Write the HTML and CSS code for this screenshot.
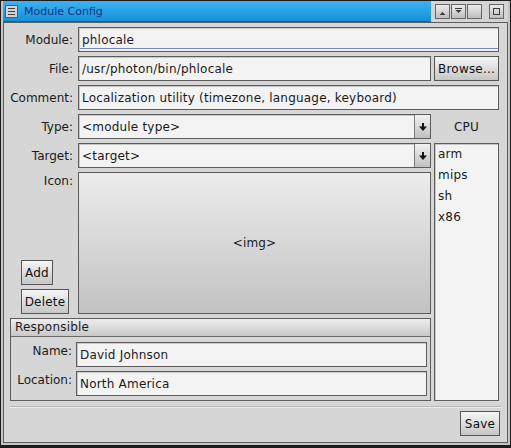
FILE: index.html
```html
<!DOCTYPE html>
<html lang="en">
<head>
    <meta charset="UTF-8">
    <title>Module Config</title>
    <link rel="stylesheet" href="styles.css">
</head>
<body>
    <div class="window">
        <div class="titlebar">
            <div class="caption">
                <span class="menu-btn"><i></i><i></i><i></i></span>
                <span class="title">Module Config</span>
            </div>
            <div class="frame-btns">
                <span class="fbtn">
                    <svg width="13" height="13" viewBox="0 0 13 13"><polygon points="3.5,10 6.5,7 9.5,10" fill="#3a3a3a"/></svg>
                </span>
                <span class="fbtn">
                    <svg width="13" height="13" viewBox="0 0 13 13"><rect x="3" y="3" width="7" height="1" fill="#3a3a3a"/><polygon points="3.5,5 9.5,5 6.5,8" fill="#3a3a3a"/></svg>
                </span>
                <span class="fbtn"></span>
                <span class="fbtn last">
                    <svg width="13" height="13" viewBox="0 0 13 13"><rect x="3.5" y="3.5" width="6" height="6" fill="none" stroke="#3a3a3a"/></svg>
                </span>
            </div>
        </div>

        <div class="body">
            <div class="form">
                <label class="lbl">Module:</label>
                <div class="field wide focused">phlocale</div>

                <label class="lbl">File:</label>
                <div class="field">/usr/photon/bin/phlocale</div>
                <button class="btn browse">Browse...</button>

                <label class="lbl">Comment:</label>
                <div class="field wide">Localization utility (timezone, language, keyboard)</div>

                <label class="lbl">Type:</label>
                <div class="combo">
                    <span class="combo-text">&lt;module type&gt;</span>
                    <span class="combo-arrow"><svg width="8" height="8" viewBox="0 0 8 8"><path d="M3 0h2v3.5h3L4 8 0 3.5h3z" fill="#111"/></svg></span>
                </div>
                <div class="cpu-label">CPU</div>

                <label class="lbl">Target:</label>
                <div class="combo">
                    <span class="combo-text">&lt;target&gt;</span>
                    <span class="combo-arrow"><svg width="8" height="8" viewBox="0 0 8 8"><path d="M3 0h2v3.5h3L4 8 0 3.5h3z" fill="#111"/></svg></span>
                </div>
                <ul class="cpu-list">
                    <li>arm</li>
                    <li>mips</li>
                    <li>sh</li>
                    <li>x86</li>
                </ul>

                <div class="icon-side">
                    <label class="lbl">Icon:</label>
                    <div class="icon-btns">
                        <button class="btn add">Add</button>
                        <button class="btn delete">Delete</button>
                    </div>
                </div>
                <div class="icon-box">&lt;img&gt;</div>

                <div class="group">
                    <div class="group-title">Responsible</div>
                    <div class="group-body">
                        <label class="lbl">Name:</label>
                        <div class="field">David Johnson</div>
                        <label class="lbl">Location:</label>
                        <div class="field">North America</div>
                    </div>
                </div>
            </div>

            <div class="footer">
                <button class="btn save">Save</button>
            </div>
        </div>
    </div>
</body>
</html>
```

FILE: styles.css
```css
body {
    margin: 0;
    background: #d6d6d6;
    font-family: "DejaVu Sans", Verdana, sans-serif;
    font-size: 12px;
    letter-spacing: 0.2px;
    color: #1a1a1a;
}

.window {
    width: 511px;
    height: 448px;
    box-sizing: border-box;
    border: 1px solid #1c1c1c;
    border-bottom-width: 3px;
    padding: 0 2px 2px;
    background: #c4c4c4;
    display: flex;
    flex-direction: column;
}

/* title bar */
.titlebar {
    height: 21px;
    display: flex;
    flex-shrink: 0;
}
.caption {
    width: 428px;
    background: linear-gradient(#3cb2f2, #1592dc);
    display: flex;
    align-items: center;
    border-bottom: 1px solid #2a5c80;
    box-sizing: border-box;
}
.menu-btn {
    width: 13px;
    height: 13px;
    margin-left: 2px;
    box-sizing: border-box;
    border: 1px solid #5a5a5a;
    background: #d2d2d2;
    display: flex;
    flex-direction: column;
    justify-content: center;
    gap: 2px;
    padding: 0 2px;
}
.menu-btn i {
    display: block;
    height: 1px;
    background: #444;
}
.title {
    margin-left: 6px;
    font-size: 11px;
    letter-spacing: 0;
    color: #16307e;
}
.frame-btns {
    flex: 1;
    display: flex;
    align-items: center;
    gap: 1px;
    padding-left: 4px;
    background: #d4d4d4;
}
.fbtn {
    width: 15px;
    height: 15px;
    box-sizing: border-box;
    border: 1px solid #666;
    background: linear-gradient(#ececec, #bdbdbd);
    display: flex;
}
.fbtn.last {
    margin-left: 6px;
}

/* client area */
.body {
    flex: 1;
    border: 1px solid #5e5e5e;
    background: #d6d6d6;
    padding-top: 4px;
}
.form {
    display: grid;
    grid-template-columns: 71px 353px 65px;
    grid-template-rows: repeat(5, 25px) 142px 83px;
    column-gap: 3px;
    row-gap: 4px;
}
.lbl {
    align-self: center;
    text-align: right;
    padding-right: 2px;
    letter-spacing: 0;
}

.field, .combo, .cpu-list {
    box-sizing: border-box;
    border: 1px solid #5c5c5c;
    background: #f3f3f3;
    box-shadow: inset 1px 1px 0 #c8c8c8;
}
.field {
    display: flex;
    align-items: center;
    padding-left: 3px;
    white-space: nowrap;
}
.field.wide {
    grid-column: 2 / 4;
}
.field.focused {
    box-shadow: inset 1px 1px 0 #c8c8c8, inset 0 -2px 0 #f3f3f3, inset 0 -3px 0 #7c88c6;
}

.combo {
    display: flex;
}
.combo-text {
    flex: 1;
    display: flex;
    align-items: center;
    padding-left: 3px;
}
.combo-arrow {
    width: 15px;
    border-left: 1px solid #7a7a7a;
    background: linear-gradient(#f2f2f2, #c0c0c0);
    display: flex;
    align-items: center;
    justify-content: center;
}

.btn {
    box-sizing: border-box;
    height: 25px;
    padding: 0;
    font: inherit;
    letter-spacing: inherit;
    color: #111;
    border: 1px solid #555;
    background: linear-gradient(#f6f6f6, #c6c6c6);
}
.browse {
    grid-column: 3;
    grid-row: 2;
}

.cpu-label {
    align-self: center;
    text-align: center;
}
.cpu-list {
    grid-column: 3;
    grid-row: 5 / 8;
    margin: 0;
    padding: 0 0 0 3px;
    list-style: none;
}
.cpu-list li {
    height: 21px;
    line-height: 21px;
}

.icon-side {
    display: flex;
    flex-direction: column;
}
.icon-side .lbl {
    align-self: stretch;
    padding-top: 2px;
}
.icon-btns {
    margin-top: auto;
    padding-left: 17px;
    display: flex;
    flex-direction: column;
    align-items: flex-start;
    gap: 4px;
}
.add {
    width: 32px;
}
.delete {
    width: 48px;
}
.icon-box {
    box-sizing: border-box;
    border: 1px solid #5c5c5c;
    background: linear-gradient(#ececec, #c2c2c2);
    display: flex;
    align-items: center;
    justify-content: center;
}

/* Responsible group */
.group {
    grid-column: 1 / 3;
    margin-left: 6px;
    border: 1px solid #5c5c5c;
}
.group-title {
    height: 17px;
    line-height: 17px;
    padding-left: 4px;
    border-bottom: 1px solid #6a6a6a;
    background: linear-gradient(#eeeeee, #c8c8c8);
}
.group-body {
    display: grid;
    grid-template-columns: 62px 351px;
    grid-template-rows: 25px 25px;
    column-gap: 3px;
    row-gap: 4px;
    padding-top: 5px;
}
.group-body .lbl {
    align-self: start;
    padding-top: 2px;
    padding-right: 1px;
}

.footer {
    margin: 5px 6px 0;
    padding-top: 4px;
    border-top: 1px solid #b8b8b8;
    box-shadow: inset 0 1px 0 #ececec;
    display: flex;
    justify-content: flex-end;
}
.save {
    width: 40px;
    margin-right: 1px;
}
```
